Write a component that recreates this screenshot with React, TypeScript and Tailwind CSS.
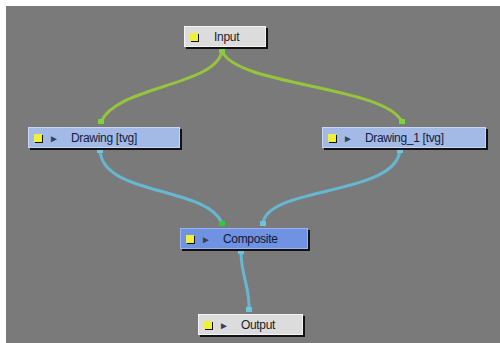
import React from "react";

type NodeProps = {
  label: string;
  x: number;
  y: number;
  w: number;
  tone: "gray" | "light" | "blue";
  arrow?: boolean;
};

const tones = {
  gray: "bg-[#dcdcdc] border-[#f4f4f4] text-[#1c1c28]",
  light: "bg-[#a3b9e6] border-[#c8d6f4] text-[#141c40]",
  blue: "bg-[#6f92e2] border-[#9ab2ee] text-[#101838]",
};

// one node of the graph, placed on the canvas by its x / y
const Node = ({ label, x, y, w, tone, arrow = true }: NodeProps) => (
  <div
    className={`absolute h-[21px] flex items-center border shadow-[2px_2px_0_#111] ${tones[tone]}`}
    style={{ left: x, top: y, width: w }}
  >
    <div className="ml-[5px] w-[8px] h-[8px] bg-[#f2ee3c] shadow-[1px_1px_0_#111]" />
    {arrow ? (
      <span className="ml-[7px] text-[10px] leading-none text-[#3b3f55]">►</span>
    ) : null}
    <span
      className={`${arrow ? "ml-[12px]" : "ml-[16px]"} text-[12px] leading-none tracking-tight`}
      style={{ fontFamily: '"Liberation Sans", Arial, sans-serif' }}
    >
      {label}
    </span>
  </div>
);

const Port = ({ x, y, c }: { x: number; y: number; c: string }) => (
  <rect x={x - 3} y={y - 3} width={6} height={5} fill={c} />
);

export default function App() {
  return (
    <div className="w-[500px] h-[343px] bg-white pl-[6px] pt-[6px]">
      <div className="relative w-full h-full bg-[#7a7a7a] overflow-hidden">
        <svg className="absolute inset-0" width={494} height={337}>
          <g fill="none" strokeWidth={3} strokeLinecap="round">
            <path d="M216 45 C210 80 110 80 95 116" stroke="#96c43c" />
            <path d="M216 45 C230 80 380 80 396 116" stroke="#96c43c" />
            <path d="M94 144 C96 190 200 180 216 217" stroke="#66b8d2" />
            <path d="M394 144 C390 190 262 180 257 217" stroke="#66b8d2" />
            <path d="M235 246 C235 270 244 280 243 304" stroke="#66b8d2" />
          </g>
          <Port x={216} y={45} c="#7ed23a" />
          <Port x={95} y={116} c="#7ed23a" />
          <Port x={396} y={116} c="#7ed23a" />
          <Port x={94} y={145} c="#6cc4de" />
          <Port x={394} y={145} c="#6cc4de" />
          <Port x={216} y={218} c="#2ecb3a" />
          <Port x={257} y={218} c="#6cc4de" />
          <Port x={235} y={246} c="#6cc4de" />
          <Port x={243} y={304} c="#6cc4de" />
        </svg>
        <Node label="Input" x={178} y={20} w={82} tone="gray" arrow={false} />
        <Node label="Drawing [tvg]" x={22} y={121} w={152} tone="light" />
        <Node label="Drawing_1 [tvg]" x={316} y={121} w={164} tone="light" />
        <Node label="Composite" x={174} y={222} w={128} tone="blue" />
        <Node label="Output" x={192} y={308} w={105} tone="gray" />
      </div>
    </div>
  );
}
